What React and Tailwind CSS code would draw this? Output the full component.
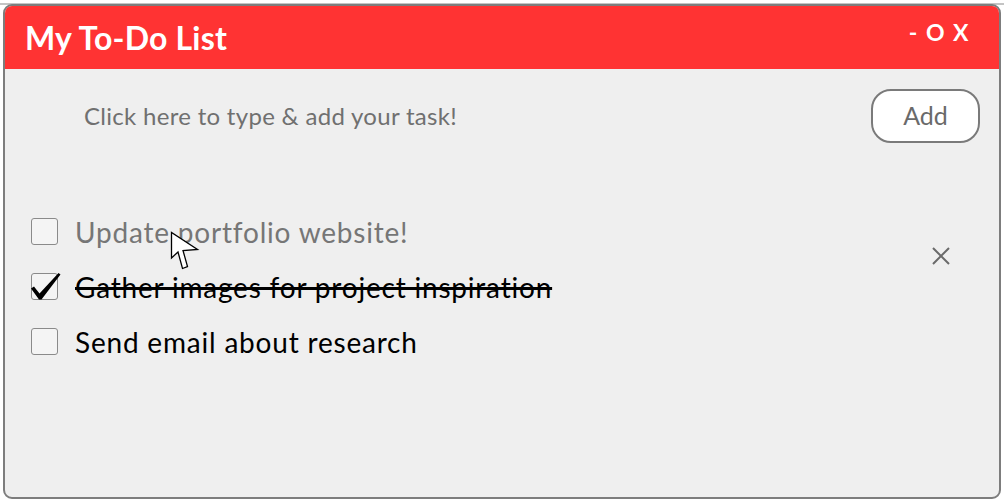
import { useState } from "react"

const tasks = [
  { id: 1, text: "Update portfolio website!", done: false, muted: true },
  { id: 2, text: "Gather images for project inspiration", done: true },
  { id: 3, text: "Send email about research", done: false },
]

function CheckBox({ checked }) {
  return (
    <div className="relative w-[27px] h-[27px] shrink-0 rounded-[3px] border border-[#8a8a8a] bg-[#f4f4f4]">
      {checked && (
        <svg
          className="absolute left-[-1px] top-[-1px] overflow-visible"
          width="30"
          height="28"
          viewBox="0 0 30 28"
        >
          <path d="M0 15.5 L3 13.5 L8.5 20.5 L27.5 0 L29.5 1.5 L10.5 26.5 L8 26.5 Z" fill="#000" />
        </svg>
      )}
    </div>
  )
}

function Cursor() {
  return (
    <svg
      className="absolute left-[170px] top-[231px] pointer-events-none"
      width="32"
      height="42"
      viewBox="0 0 32 42"
    >
      <path
        d="M1.5 1.5 L1.5 27 L8 21 L12.5 37.5 L17.5 35.5 L13 19.5 L27.5 18.5 Z"
        fill="#fff"
        stroke="#000"
        strokeWidth="1.3"
        strokeLinejoin="miter"
      />
    </svg>
  )
}

export default function App() {
  const [items] = useState(tasks)

  return (
    <div className="h-[502px] w-full bg-white relative overflow-hidden" style={{ fontFamily: "Lato, 'Open Sans', sans-serif" }}>
      <div className="h-[3px]" />
      <div className="h-[2px] bg-[#c4c4c4]" />
      <div className="mx-[3px] h-[495px] -mt-[1px] rounded-[9px] border-2 border-[#7d7d7d] bg-[#efefef] overflow-hidden flex flex-col">
        <div className="h-[63px] bg-[#ff3333] flex items-center justify-between pl-[20px] pr-[29px] shrink-0">
          <h1 className="text-white font-bold text-[32px] leading-none tracking-[0.2px]">My To-Do List</h1>
          <div className="text-white font-bold text-[23px] leading-none self-start mt-[15px] tracking-[1.5px]">- O X</div>
        </div>

        <div className="flex items-center justify-between pt-[20px] pl-[79px] pr-[19px]">
          <span className="text-[#707070] text-[24px] tracking-[0.3px]">Click here to type &amp; add your task!</span>
          <button className="w-[109px] h-[54px] rounded-[20px] border-2 border-[#7a7a7a] bg-white text-[#6a6a6a] text-[25px]">
            Add
          </button>
        </div>

        <div className="flex justify-between pt-[61px] pl-[26px] pr-[48px]">
          <ul className="flex flex-col">
            {items.map((t) => (
              <li key={t.id} className="h-[55px] flex items-center gap-[17px]">
                <CheckBox checked={t.done} />
                <span
                  className={
                    t.done
                      ? "text-[28px] tracking-[0.8px] text-black line-through decoration-[3px] decoration-black"
                      : t.muted
                      ? "text-[28px] tracking-[0.8px] text-[#767676]"
                      : "text-[28px] tracking-[0.8px] text-black"
                  }
                >
                  {t.text}
                </span>
              </li>
            ))}
          </ul>
          <svg className="mt-[42px]" width="20" height="20" viewBox="0 0 20 20">
            <path d="M2 2 L18 18 M18 2 L2 18" stroke="#6a6a6a" strokeWidth="2" />
          </svg>
        </div>
      </div>
      <Cursor />
    </div>
  )
}
